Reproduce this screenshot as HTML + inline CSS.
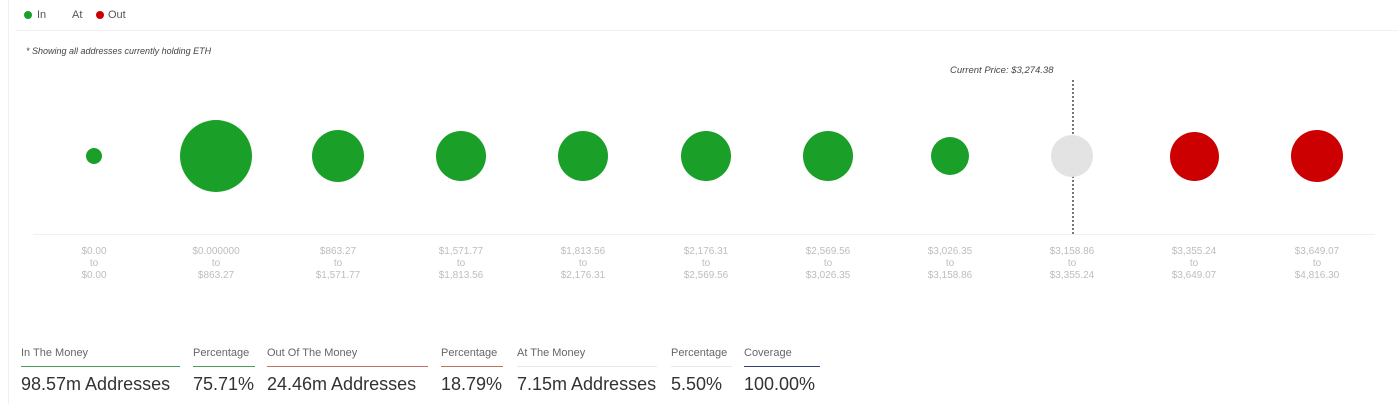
<!DOCTYPE html>
<html><head><style>
body{margin:0;width:1398px;height:404px;background:#fff;font-family:"Liberation Sans",sans-serif;position:relative;overflow:hidden}
.a{position:absolute}
.c{position:absolute;border-radius:50%}
.g{background:#1a9f29}.r{background:#cc0000}
.lab{position:absolute;top:246px;width:100px;text-align:center;font-size:10px;line-height:12px;color:#bdbdbd}
.sl{position:absolute;top:347px;font-size:11px;color:#666;padding-bottom:7px;border-bottom-width:1px;border-bottom-style:solid}
.sv{position:absolute;top:374px;font-size:18px;color:#333;white-space:nowrap}
</style></head><body>
<div class="a" style="left:8px;top:0;width:1px;height:404px;background:#f0f0f0"></div>
<div class="a" style="left:24px;top:11px;width:8px;height:8px;border-radius:50%;background:#1a9f29"></div>
<div class="a" style="left:37px;top:9px;font-size:11px;color:#555">In</div>
<div class="a" style="left:72px;top:9px;font-size:11px;color:#555">At</div>
<div class="a" style="left:96px;top:11px;width:8px;height:8px;border-radius:50%;background:#cc0000"></div>
<div class="a" style="left:108px;top:9px;font-size:11px;color:#555">Out</div>
<div class="a" style="left:15px;top:30px;width:1383px;height:1px;background:#f2f2f2"></div>
<div class="a" style="left:26px;top:46px;font-size:9px;font-style:italic;color:#444">* Showing all addresses currently holding ETH</div>
<div class="a" style="left:950px;top:65px;font-size:9.5px;font-style:italic;color:#444">Current Price: $3,274.38</div>
<div class="a" style="left:1072px;top:80px;height:154px;border-left:2px dotted #777"></div>
<div class="a" style="left:33px;top:234px;width:1342px;height:1px;background:#f0f0f0"></div>
<div class="c g" style="left:86px;top:148px;width:16px;height:16px"></div>
<div class="c g" style="left:180px;top:120px;width:72px;height:72px"></div>
<div class="c g" style="left:312px;top:130px;width:52px;height:52px"></div>
<div class="c g" style="left:436px;top:131px;width:50px;height:50px"></div>
<div class="c g" style="left:558px;top:131px;width:50px;height:50px"></div>
<div class="c g" style="left:681px;top:131px;width:50px;height:50px"></div>
<div class="c g" style="left:803px;top:131px;width:50px;height:50px"></div>
<div class="c g" style="left:931px;top:137px;width:38px;height:38px"></div>
<div class="c" style="left:1051px;top:135px;width:42px;height:42px;background:#e3e3e3"></div>
<div class="c r" style="left:1170px;top:132px;width:49px;height:49px"></div>
<div class="c r" style="left:1291px;top:130px;width:52px;height:52px"></div>
<div class="lab" style="left:44px">$0.00<br>to<br>$0.00</div>
<div class="lab" style="left:166px">$0.000000<br>to<br>$863.27</div>
<div class="lab" style="left:288px">$863.27<br>to<br>$1,571.77</div>
<div class="lab" style="left:411px">$1,571.77<br>to<br>$1,813.56</div>
<div class="lab" style="left:533px">$1,813.56<br>to<br>$2,176.31</div>
<div class="lab" style="left:656px">$2,176.31<br>to<br>$2,569.56</div>
<div class="lab" style="left:778px">$2,569.56<br>to<br>$3,026.35</div>
<div class="lab" style="left:900px">$3,026.35<br>to<br>$3,158.86</div>
<div class="lab" style="left:1022px">$3,158.86<br>to<br>$3,355.24</div>
<div class="lab" style="left:1144px">$3,355.24<br>to<br>$3,649.07</div>
<div class="lab" style="left:1267px">$3,649.07<br>to<br>$4,816.30</div>
<div class="sl" style="left:21px;width:159px;border-bottom-color:#4a9d57">In The Money</div>
<div class="sl" style="left:193px;width:62px;border-bottom-color:#4a9d57">Percentage</div>
<div class="sl" style="left:267px;width:161px;border-bottom-color:#c2705f">Out Of The Money</div>
<div class="sl" style="left:441px;width:62px;border-bottom-color:#c2705f">Percentage</div>
<div class="sl" style="left:517px;width:140px;border-bottom-color:#e8e8e8">At The Money</div>
<div class="sl" style="left:671px;width:61px;border-bottom-color:#e8e8e8">Percentage</div>
<div class="sl" style="left:744px;width:76px;border-bottom-color:#2d4373">Coverage</div>
<div class="sv" style="left:21px">98.57m Addresses</div>
<div class="sv" style="left:193px">75.71%</div>
<div class="sv" style="left:267px">24.46m Addresses</div>
<div class="sv" style="left:441px">18.79%</div>
<div class="sv" style="left:517px">7.15m Addresses</div>
<div class="sv" style="left:671px">5.50%</div>
<div class="sv" style="left:744px">100.00%</div>
</body></html>
